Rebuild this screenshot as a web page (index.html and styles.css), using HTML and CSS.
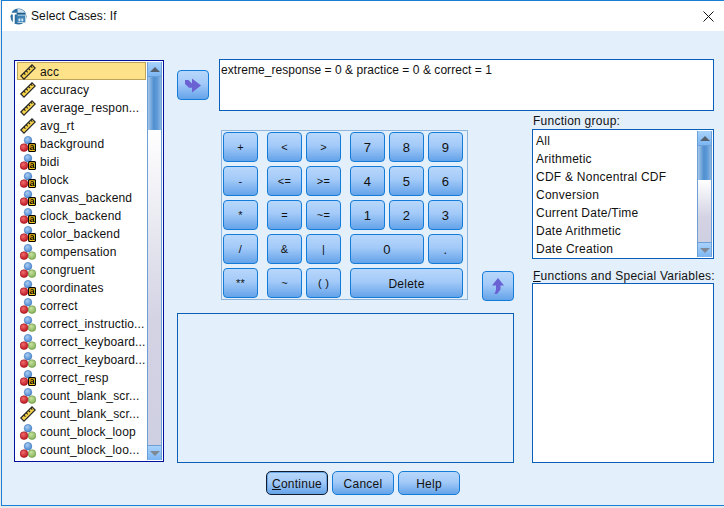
FILE: index.html
```html
<!DOCTYPE html>
<html lang="en">
<head>
<meta charset="utf-8">
<title>Select Cases: If</title>
<link rel="stylesheet" href="styles.css">
</head>
<body>
<svg class="defs" width="0" height="0" aria-hidden="true">
  <defs>
    <radialGradient id="gb" cx=".4" cy=".35" r=".7"><stop offset="0" stop-color="#a9cdf2"/><stop offset="1" stop-color="#4a86cf"/></radialGradient>
    <radialGradient id="gr" cx=".4" cy=".35" r=".7"><stop offset="0" stop-color="#f06a6a"/><stop offset="1" stop-color="#b8141f"/></radialGradient>
    <radialGradient id="gg" cx=".4" cy=".35" r=".7"><stop offset="0" stop-color="#c9e2a0"/><stop offset="1" stop-color="#7fae55"/></radialGradient>
    <symbol id="scale" viewBox="0 0 16 16">
      <path d="M.8 12 12 .8 15.2 4 4 15.2Z" fill="#f4d24c" stroke="#222" stroke-width="1.1"/>
      <path d="M3.8 9l1.6 1.6M6.1 6.7l1.6 1.6M8.4 4.4l1.6 1.6M10.7 2.1l1.6 1.6" stroke="#222" stroke-width="1.1" fill="none"/>
    </symbol>
    <symbol id="balls" viewBox="0 0 16 16">
      <circle cx="8" cy="4.2" r="3.8" fill="url(#gb)" stroke="#3d76bd" stroke-width=".6"/>
      <circle cx="12" cy="11.6" r="3.9" fill="url(#gg)" stroke="#6f9a48" stroke-width=".6"/>
      <circle cx="4" cy="11.6" r="3.9" fill="url(#gr)" stroke="#a5121c" stroke-width=".6"/>
    </symbol>
    <symbol id="nominal" viewBox="0 0 16 16">
      <circle cx="8" cy="4.2" r="3.8" fill="url(#gb)" stroke="#3d76bd" stroke-width=".6"/>
      <circle cx="4" cy="11.6" r="3.9" fill="url(#gr)" stroke="#a5121c" stroke-width=".6"/>
      <rect x="8.6" y="7.6" width="6.9" height="7.9" rx="1.2" fill="#f7c51e" stroke="#000" stroke-width="1.1"/>
      <text x="12" y="14.2" class="icon-a">a</text>
    </symbol>
    <symbol id="arrow-right" viewBox="0 0 18 18">
      <path d="M1 4h3.5l3.5 3.5V2.5L17 9.5l-9 7v-4.8H5L1 8Z" fill="#6a61d2"/>
    </symbol>
    <symbol id="arrow-up" viewBox="0 0 14 18">
      <path d="M7 1 13 8.5H9.5V12.5L6 17H3.5L5 13V8.5H1Z" fill="#6a61d2"/>
    </symbol>
  </defs>
</svg>

<div class="window">
  <header class="titlebar">
    <svg class="app-icon" width="17" height="17" viewBox="0 0 18 18" aria-hidden="true">
      <circle cx="9" cy="9" r="8.5" fill="#2f6f9f"/>
      <path d="M8 1a8 8 0 0 1 9 8v7H8Z" fill="#cfe2ef"/>
      <path d="M0 5h8v2H5v9H3V7H0Z" fill="#fff"/>
      <rect x="7" y="8" width="9" height="7" fill="#3f83b5"/>
      <rect x="7" y="5" width="9" height="2" fill="#1c5c8a"/>
      <path d="M9 11h2v3H9zM12 11h2v3h-2z" fill="#d6e9f5"/>
    </svg>
    <span class="title">Select Cases: If</span>
    <svg class="close" width="11" height="11" viewBox="0 0 11 11" aria-hidden="true"><path d="M.5.5l10 10M10.5.5l-10 10" stroke="#111" stroke-width="1" fill="none"/></svg>
  </header>

  <main class="content">
    <div class="listbox variables">
      <ul class="rows">
        <li class="row selected"><svg class="icon"><use href="#scale"/></svg>acc</li>
        <li class="row"><svg class="icon"><use href="#scale"/></svg>accuracy</li>
        <li class="row"><svg class="icon"><use href="#scale"/></svg>average_respon...</li>
        <li class="row"><svg class="icon"><use href="#scale"/></svg>avg_rt</li>
        <li class="row"><svg class="icon"><use href="#nominal"/></svg>background</li>
        <li class="row"><svg class="icon"><use href="#nominal"/></svg>bidi</li>
        <li class="row"><svg class="icon"><use href="#nominal"/></svg>block</li>
        <li class="row"><svg class="icon"><use href="#nominal"/></svg>canvas_backend</li>
        <li class="row"><svg class="icon"><use href="#nominal"/></svg>clock_backend</li>
        <li class="row"><svg class="icon"><use href="#nominal"/></svg>color_backend</li>
        <li class="row"><svg class="icon"><use href="#balls"/></svg>compensation</li>
        <li class="row"><svg class="icon"><use href="#balls"/></svg>congruent</li>
        <li class="row"><svg class="icon"><use href="#nominal"/></svg>coordinates</li>
        <li class="row"><svg class="icon"><use href="#balls"/></svg>correct</li>
        <li class="row"><svg class="icon"><use href="#balls"/></svg>correct_instructio...</li>
        <li class="row"><svg class="icon"><use href="#balls"/></svg>correct_keyboard...</li>
        <li class="row"><svg class="icon"><use href="#balls"/></svg>correct_keyboard...</li>
        <li class="row"><svg class="icon"><use href="#nominal"/></svg>correct_resp</li>
        <li class="row"><svg class="icon"><use href="#balls"/></svg>count_blank_scr...</li>
        <li class="row"><svg class="icon"><use href="#scale"/></svg>count_blank_scr...</li>
        <li class="row"><svg class="icon"><use href="#balls"/></svg>count_block_loop</li>
        <li class="row"><svg class="icon"><use href="#balls"/></svg>count_block_loo...</li>
      </ul>
      <div class="scrollbar">
        <span class="sb-btn"><i class="tri up"></i></span>
        <span class="thumb thumb-vars"></span>
        <span class="track"></span>
        <span class="sb-btn"><i class="tri down"></i></span>
      </div>
    </div>

    <div class="workspace">
      <div class="top-row">
        <button class="btn move" type="button" aria-label="Move"><svg width="18" height="18"><use href="#arrow-right"/></svg></button>
        <div class="expression">extreme_response = 0 &amp; practice = 0 &amp; correct = 1</div>
      </div>

      <div class="lower-row">
        <div class="middle">
          <div class="pad-row">
            <div class="keypad">
              <div class="keys keys-ops">
                <button class="btn key" type="button">+</button>
                <button class="btn key" type="button">-</button>
                <button class="btn key" type="button">*</button>
                <button class="btn key" type="button">/</button>
                <button class="btn key" type="button">**</button>
              </div>
              <div class="keys keys-rel">
                <button class="btn key" type="button">&lt;</button>
                <button class="btn key" type="button">&gt;</button>
                <button class="btn key" type="button">&lt;=</button>
                <button class="btn key" type="button">&gt;=</button>
                <button class="btn key" type="button">=</button>
                <button class="btn key" type="button">~=</button>
                <button class="btn key" type="button">&amp;</button>
                <button class="btn key" type="button">|</button>
                <button class="btn key" type="button">~</button>
                <button class="btn key" type="button">( )</button>
              </div>
              <div class="keys keys-num">
                <button class="btn key num" type="button">7</button>
                <button class="btn key num" type="button">8</button>
                <button class="btn key num" type="button">9</button>
                <button class="btn key num" type="button">4</button>
                <button class="btn key num" type="button">5</button>
                <button class="btn key num" type="button">6</button>
                <button class="btn key num" type="button">1</button>
                <button class="btn key num" type="button">2</button>
                <button class="btn key num" type="button">3</button>
                <button class="btn key num span2" type="button">0</button>
                <button class="btn key num" type="button">.</button>
                <button class="btn key num span3 word" type="button">Delete</button>
              </div>
            </div>
            <button class="btn move up-btn" type="button" aria-label="Move up"><svg width="14" height="18"><use href="#arrow-up"/></svg></button>
          </div>
          <div class="output"></div>
        </div>

        <aside class="functions">
          <label class="field-label"><span>Function <u>g</u>roup:</span></label>
          <div class="listbox func-group">
            <ul class="rows plain">
              <li class="row">All</li>
              <li class="row">Arithmetic</li>
              <li class="row">CDF &amp; Noncentral CDF</li>
              <li class="row">Conversion</li>
              <li class="row">Current Date/Time</li>
              <li class="row">Date Arithmetic</li>
              <li class="row">Date Creation</li>
            </ul>
            <div class="scrollbar">
              <span class="sb-btn"><i class="tri up"></i></span>
              <span class="thumb thumb-func"></span>
              <span class="track"></span>
              <span class="sb-btn"><i class="tri down"></i></span>
            </div>
          </div>
          <label class="field-label second"><span><u>F</u>unctions and Special Variables:</span></label>
          <div class="func-vars"></div>
        </aside>
      </div>

      <div class="actions">
        <button class="btn action default" type="button"><u>C</u>ontinue</button>
        <button class="btn action" type="button">Cancel</button>
        <button class="btn action" type="button">Help</button>
      </div>
    </div>
  </main>
</div>
</body>
</html>
```

FILE: styles.css
```css
* { box-sizing: border-box; }
html, body { margin: 0; padding: 0; }
body {
  width: 724px;
  height: 508px;
  background: #e9e9e9;
  overflow: hidden;
  font-family: "Liberation Sans", Arial, sans-serif;
  font-size: 12px;
  letter-spacing: 0.25px;
  color: #111;
}
.defs { position: absolute; }
.icon-a { font: bold 9px "Liberation Sans", Arial, sans-serif; text-anchor: middle; fill: #000; }

.window {
  width: 723px;
  height: 506px;
  margin-left: 1px;
  background: #e3effb;
  border: 1px solid #1a7fd4;
  border-right-width: 0;
  display: flex;
  flex-direction: column;
}
.titlebar {
  height: 30px;
  background: #fff;
  display: flex;
  align-items: center;
  padding: 0 10px 0 8px;
  flex: none;
}
.title { margin-left: 4px; letter-spacing: 0.1px; }
.close { margin-left: auto; }

.content {
  display: flex;
  padding: 29px 9px 0 12px;
  flex: 1;
  align-items: flex-start;
}

.listbox {
  display: flex;
  background: #fff;
  border: 1px solid #0a60b8;
}
.variables {
  width: 150px;
  height: 402px;
  border: 1px solid #00109c;
  padding: 1px 1px 1px 2px;
  flex: none;
}
.rows { list-style: none; margin: 0; padding: 0; flex: 1; min-width: 0; overflow: hidden; letter-spacing: 0.15px; }
.row {
  height: 18px;
  padding-top: 2px;
  line-height: 16px;
  white-space: nowrap;
  display: flex;
  align-items: center;
}
.icon { width: 16px; height: 16px; margin: 0 4px 0 3px; flex: none; }
.selected {
  background: #fde28a;
  border: 1px solid #bba35a;
  padding-top: 1px;
}
.selected .icon { margin-left: 2px; }
.plain { letter-spacing: 0.25px; padding-top: 1px; }
.plain .row { padding-left: 3px; }

.scrollbar {
  width: 15px;
  margin-left: 1px;
  display: flex;
  flex-direction: column;
  flex: none;
  border-left: 1px solid #6ea0d8;
  border-right: 1px solid #6ea0d8;
}
.sb-btn {
  height: 15px;
  flex: none;
  display: flex;
  align-items: center;
  justify-content: center;
  background: linear-gradient(#a8d2fb, #7db6f2);
  border: 1px solid #6ea0d8;
  border-width: 0 0 1px;
}
.sb-btn:last-child { border-width: 1px 0 0; }
.tri { width: 0; height: 0; border-left: 5px solid transparent; border-right: 5px solid transparent; }
.tri.up { border-bottom: 5px solid #55606e; }
.tri.down { border-top: 5px solid #7f8894; }
.thumb {
  flex: none;
  background: linear-gradient(90deg, #a6c7ea, #4f8fd0 45%, #5e9ad8 70%, #8fb8e3);
}
.thumb-vars { height: 53px; }
.thumb-func { height: 34px; }
.track { flex: 1; background: linear-gradient(#ffffff, #d3d3e4 60%, #cfcfe2); }

.workspace {
  margin-left: 13px;
  width: 537px;
  display: flex;
  flex-direction: column;
}
.top-row { display: flex; align-items: flex-start; gap: 10px; height: 51px; }
.move { width: 32px; height: 30px; margin-top: 10px; flex: none; }
.expression {
  width: 495px;
  height: 52px;
  margin-top: -1px;
  background: #fff;
  border: 1px solid #0a60b8;
  padding: 3px 1px;
  line-height: 14px;
  letter-spacing: 0.05px;
}

.btn {
  font: inherit;
  letter-spacing: inherit;
  color: #111;
  padding: 0;
  border: 1px solid #137bd8;
  border-radius: 4px;
  background: linear-gradient(#b8d7fb, #a3caf8 45%, #64a3e9);
  display: flex;
  align-items: center;
  justify-content: center;
}

.lower-row { display: flex; }
.middle { width: 355px; flex: none; }
.pad-row { display: flex; align-items: flex-end; margin-left: 44px; margin-top: 19px; }
.keypad {
  width: 247px;
  height: 170px;
  border: 1px solid #8fb4dc;
  padding: 1px 0 0 1px;
  display: flex;
  flex: none;
  gap: 9px;
}
.keys {
  display: grid;
  grid-auto-rows: 30px;
  grid-template-columns: 35px;
  row-gap: 4px;
  column-gap: 4px;
}
.keys-rel { grid-template-columns: 35px 35px; }
.keys-num { grid-template-columns: 35px 35px 35px; }
.key { font-size: 11px; font-weight: 400; }
.num { font-size: 13px; padding-top: 1px; }
.word { font-size: 12px; }
.span2 { grid-column: span 2; }
.span3 { grid-column: span 3; }
.up-btn { margin: 0 0 -1px 14px; }
.output {
  width: 337px;
  height: 150px;
  margin-top: 13px;
  background: #e3effb;
  border: 1px solid #0a60b8;
}

.functions { width: 182px; flex: none; }
.field-label { display: block; height: 18px; padding-top: 1px; line-height: 18px; padding-left: 1px; white-space: nowrap; }
.func-group { height: 130px; width: 182px; padding: 0 1px 0 0; }
.func-group .scrollbar { margin-top: 1px; margin-bottom: 1px; }
.second { height: 24px; padding-top: 8px; line-height: 18px; }
.func-vars { width: 182px; height: 180px; background: #fff; border: 1px solid #0a60b8; }

.actions { display: flex; gap: 4px; margin: 8px 0 0 89px; }
.action { width: 62px; height: 24px; border-radius: 5px; padding-top: 1px; }
.default { border-color: #111c33; box-shadow: inset 0 0 0 1px #6aa7e4; }
```
